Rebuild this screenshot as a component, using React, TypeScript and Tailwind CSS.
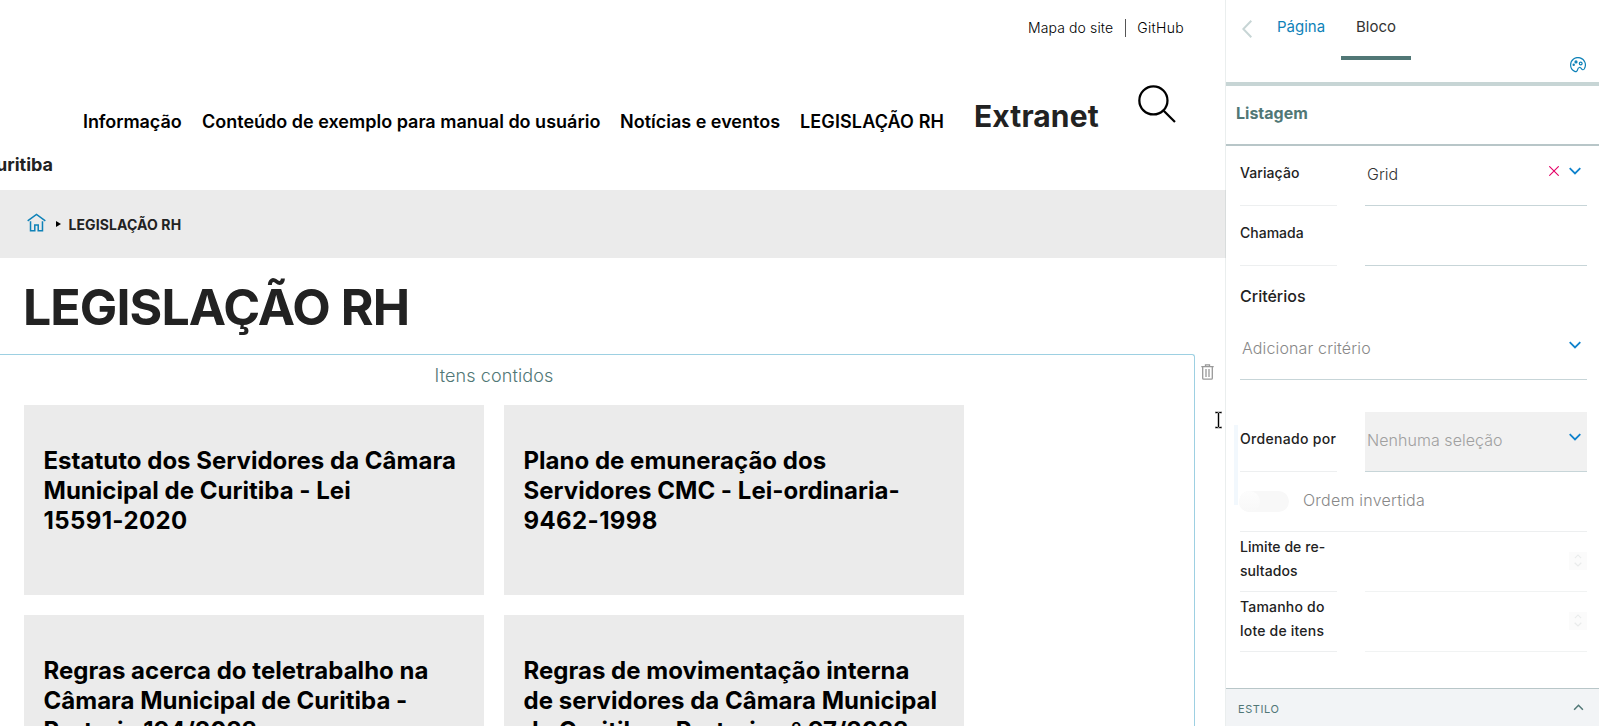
import type { ReactNode } from 'react';

const cards = [
  ['Estatuto dos Servidores da Câmara', 'Municipal de Curitiba - Lei', '15591-2020'],
  ['Plano de emuneração dos', 'Servidores CMC - Lei-ordinaria-', '9462-1998'],
  ['Regras acerca do teletrabalho na', 'Câmara Municipal de Curitiba -', 'Portaria 194/2023'],
  ['Regras de movimentação interna', 'de servidores da Câmara Municipal', 'de Curitiba - Portaria nº 97/2023'],
];

function Chevron({ up = false, className = '' }: { up?: boolean; className?: string }) {
  return (
    <svg viewBox="0 0 12 8" className={className} fill="none" stroke="currentColor" strokeWidth="1.8">
      <path d={up ? 'M1 6.5 6 1.5 11 6.5' : 'M.7 1.2 6 6.4 11.3 1.2'} />
    </svg>
  );
}

function Label({ children }: { children: ReactNode }) {
  return (
    <div className="flex h-[60px] w-[97px] shrink-0 items-center border-b border-[#edeff0] pb-[5px] text-sm leading-6 font-medium whitespace-nowrap text-[#222]">
      <div>{children}</div>
    </div>
  );
}

function Stepper() {
  return (
    <div className="flex h-[60px] w-[222px] items-center justify-end border-b border-[#f1f3f3] pb-[2px]">
      <div className="flex h-[18px] w-[18px] flex-col items-center justify-center gap-[3px] bg-[#fbfbfb] text-[#e9ebeb]">
        <Chevron up className="h-[5px] w-2" />
        <Chevron className="h-[5px] w-2" />
      </div>
    </div>
  );
}

function Sidebar() {
  return (
    <aside className="relative -ml-px flex h-full w-[374px] shrink-0 flex-col border-l border-[#517776]/12 bg-white bg-clip-padding">
      <div className="flex h-[86px] justify-between border-b-4 border-[#c7d5d5] pr-[13px]">
        <div className="flex h-[60px] pl-[16px]">
          <svg viewBox="0 0 10 18" className="mt-5 h-[18px] w-[10px]" fill="none" stroke="#c7d5d5" strokeWidth="2">
            <path d="M9.3.8 1.300 9l8 8.200" />
          </svg>
          <div className="ml-[25px] w-[64px] pt-[15px] text-[15px] leading-6 text-[#0f82b8]">Página</div>
          <div className="w-[70px] border-b-4 border-[#517776] pt-[15px] pl-[15px] text-[15px] leading-6 text-[#333]">Bloco</div>
        </div>
        <svg viewBox="0 0 16 16" className="mt-[57px] h-4 w-4" fill="none" stroke="#0f82b8" strokeWidth="1.200">
          <path d="M4.700 14.400C2 13.200.6 10.800.6 8a7.400 7.400 0 1 1 13.600 4c-.9 1.200-2 .8-2.600-.1-.7-1-1.200-1.700-2.300-1.400-1 .2-1.400.8-1.600 1.800-.3 1.600-1.400 2.800-3 2.100Z" />
          <circle cx="10.700" cy="6.500" r="1.400" />
          <circle cx="6" cy="4.900" r="1" fill="#0f82b8" />
          <circle cx="3.700" cy="7.700" r=".6" fill="#0f82b8" />
        </svg>
      </div>
      <div className="flex h-[60px] items-center border-b-2 border-[#b8c6c8] pb-1 pl-[10px] text-base font-bold text-[#517776]">Listagem</div>

      <div className="flex flex-1 flex-col pr-3 pl-[14px]">
        <div className="flex justify-between">
          <Label><span className="tracking-[0.08px]">Variação</span></Label>
          <div className="flex h-[60px] w-[222px] items-center border-b border-[#c7d5d8] pb-[3px] pl-[2px] text-base font-light text-[#333]">
            <span className="flex-1">Grid</span>
            <svg viewBox="0 0 10 10" className="mr-[10px] mb-[6px] h-[10px] w-[10px]" stroke="#e40166" strokeWidth="1.100">
              <path d="M.3.3 9.700 9.700M9.700.3.3 9.700" />
            </svg>
            <Chevron className="mr-[6px] mb-[6px] h-2 w-3 text-[#0f82cc]" />
          </div>
        </div>
        <div className="flex justify-between">
          <Label>Chamada</Label>
          <div className="h-[60px] w-[222px] border-b border-[#c7d5d8]" />
        </div>
        <div className="h-[54px] pt-[18px] text-base leading-6 font-medium text-[#222]">Critérios</div>
        <div className="flex h-[60px] items-center border-b border-[#c7d5d8] pb-[3px] pl-[2px] text-base font-light text-[#888]">
          <span className="flex-1 tracking-[0.14px]">Adicionar critério</span>
          <Chevron className="mr-[6px] mb-[6px] h-2 w-3 text-[#0f82cc]" />
        </div>
        <div className="relative mt-8">
          <div className="absolute top-[13px] -left-[6px] h-20 w-1 bg-[#f2f8fd]" />
          <div className="flex justify-between">
            <Label><span className="tracking-[0.3px]">Ordenado por</span></Label>
            <div className="flex h-[60px] w-[222px] items-center border-b border-[#c7d5d8] bg-[#f1f1f1] pb-[3px] pl-[2px] text-base font-light text-[#a0a0a0]">
              <span className="flex-1 tracking-[0.05px]">Nenhuma seleção</span>
              <Chevron className="mr-[6px] mb-[6px] h-2 w-3 text-[#0f82cc]" />
            </div>
          </div>
          <div className="flex h-[60px] items-center border-b border-[#edeff0]">
            <div className="relative -ml-px h-[21px] w-[50px] rounded-full bg-[#f8f8f8]">
              <div className="h-[21px] w-[21px] rounded-full bg-gradient-to-b from-[#fdfdfd] to-[#f8f8f8]" />
            </div>
            <div className="ml-[14px] pb-[3px] text-base font-light tracking-[0.22px] text-[#888]">Ordem invertida</div>
          </div>
        </div>
        <div className="flex justify-between">
          <Label><span className="tracking-[0.06px]">Limite de re-<br />sultados</span></Label>
          <Stepper />
        </div>
        <div className="flex justify-between">
          <Label><span className="tracking-[0.2px]">Tamanho do<br />lote de itens</span></Label>
          <Stepper />
        </div>
      </div>

      <div className="flex h-[38px] shrink-0 items-center justify-between border-t border-[#b8c6c8] bg-[#f2f4f6] pt-[3px] pr-[15px] pl-3 text-[11px] text-[#517776]">
        <span className="tracking-[0.55px]">ESTILO</span>
        <Chevron up className="mb-[3px] h-[7px] w-[11px]" />
      </div>
    </aside>
  );
}

export default function App() {
  return (
    <div className="flex h-[726px] w-[1599px] overflow-hidden bg-white font-['Inter',sans-serif]">
      <main className="flex w-[1226px] shrink-0 flex-col">
        <header className="h-[190px] shrink-0">
          <div className="flex h-[56px] items-center justify-end pr-[42px] text-sm font-light text-black">
            <span className="tracking-[0.13px]">Mapa do site</span>
            <span className="mr-[11px] ml-3 h-[18px] w-px bg-[#555]" />
            <span className="tracking-[0.3px]">GitHub</span>
          </div>
          <nav className="flex h-[97px] items-baseline pt-[38px] pl-[83px] text-lg font-semibold whitespace-nowrap text-black">
            <span className="w-[119px] tracking-[-0.08px]">Informação</span>
            <span className="w-[418px]">Conteúdo de exemplo para manual do usuário</span>
            <span className="w-[180px]">Notícias e eventos</span>
            <span className="w-[174px] tracking-[0.12px]">LEGISLAÇÃO RH</span>
            <span className="relative -top-px w-[164px] text-[30px] font-bold tracking-[0.12px] text-[#222]">Extranet</span>
            <svg viewBox="0 0 37 37" className="-mt-[9px] h-[38px] w-[38px] self-start" fill="none" stroke="#000" strokeWidth="2.200">
              <circle cx="15" cy="15" r="13.700" />
              <path d="m25 25 11 11" />
            </svg>
          </nav>
          <div className="flex w-[53px] justify-end text-lg leading-6 font-bold whitespace-nowrap text-[#222]">Câmara Municipal de Curitiba</div>
        </header>

        <div className="flex h-[68px] shrink-0 items-center bg-[#ebebeb] pl-[27px]">
          <svg viewBox="0 0 20 20" className="mb-[3px] h-[19px] w-[19px]" fill="none" stroke="#0f82b8" strokeWidth="1.600">
            <path d="M.7 8.200 10 1.400l9.300 6.800M3.700 8.700v10h4.500v-6h3.600v6h4.500v-10" />
          </svg>
          <span className="ml-[10px] h-0 w-0 border-y-[3px] border-l-[5px] border-y-transparent border-l-black" />
          <span className="ml-[7.500px] pt-[2px] text-sm font-bold tracking-[0.1px] text-[#222]">LEGISLAÇÃO RH</span>
        </div>
        <h1 className="h-[96px] shrink-0 pt-[17px] pl-[23px] text-[50px] leading-[64px] font-bold tracking-[-0.9px] text-[#222]">LEGISLAÇÃO RH</h1>

        <div className="flex min-h-0 flex-1">
          <section className="w-[1195px] shrink-0 rounded-tr-[3px] border-t border-r border-[#9dd0e2]">
            <div className="h-[50px] w-[988px] pt-[7px] text-center text-lg font-light tracking-[0.12px] text-[#517776]">Itens contidos</div>
            <div className="grid grid-cols-[460px_460px] gap-5 pl-6">
              {cards.map((lines) => (
                <article key={lines[0]} className="h-[190px] bg-[#ebebeb] pt-[41px] pl-[19.500px] text-2xl leading-[30px] font-bold tracking-[0.02px] whitespace-nowrap text-black">
                  <div>{lines[0]}</div>
                  <div>{lines[1]}</div>
                  <div className={lines[2].length < 12 ? 'tracking-[0.38px]' : 'tracking-[0.06px]'}>{lines[2]}</div>
                </article>
              ))}
            </div>
          </section>
          <div className="pt-[10px] pl-[6px]">
            <svg viewBox="0 0 13 16" className="h-4 w-[13px]" fill="none" stroke="#999" strokeWidth="1.300">
              <path d="M.3 2.600h12.400M4.500 2.500V.8h4v1.700M1.700 2.800v11.400q0 1 1 1h7.600q1 0 1-1V2.800M5 5v8M8 5v8" />
            </svg>
            <svg viewBox="0 0 9 20" className="mt-[30px] ml-[13px] h-5 w-[9px]" fill="none">
              <path d="M1 2.500h2.500l1 .8 1-.8H8M4.500 3v14M1 17.500h2.500l1-.8 1 .8H8" stroke="#bbb" strokeWidth="2.600" />
              <path d="M1.500 2.500h2l1 .8 1-.8h2M4.500 3v14M1.500 17.500h2l1-.8 1 .8h2" stroke="#000" strokeWidth="1" />
            </svg>
          </div>
        </div>
      </main>
      <Sidebar />
    </div>
  );
}
